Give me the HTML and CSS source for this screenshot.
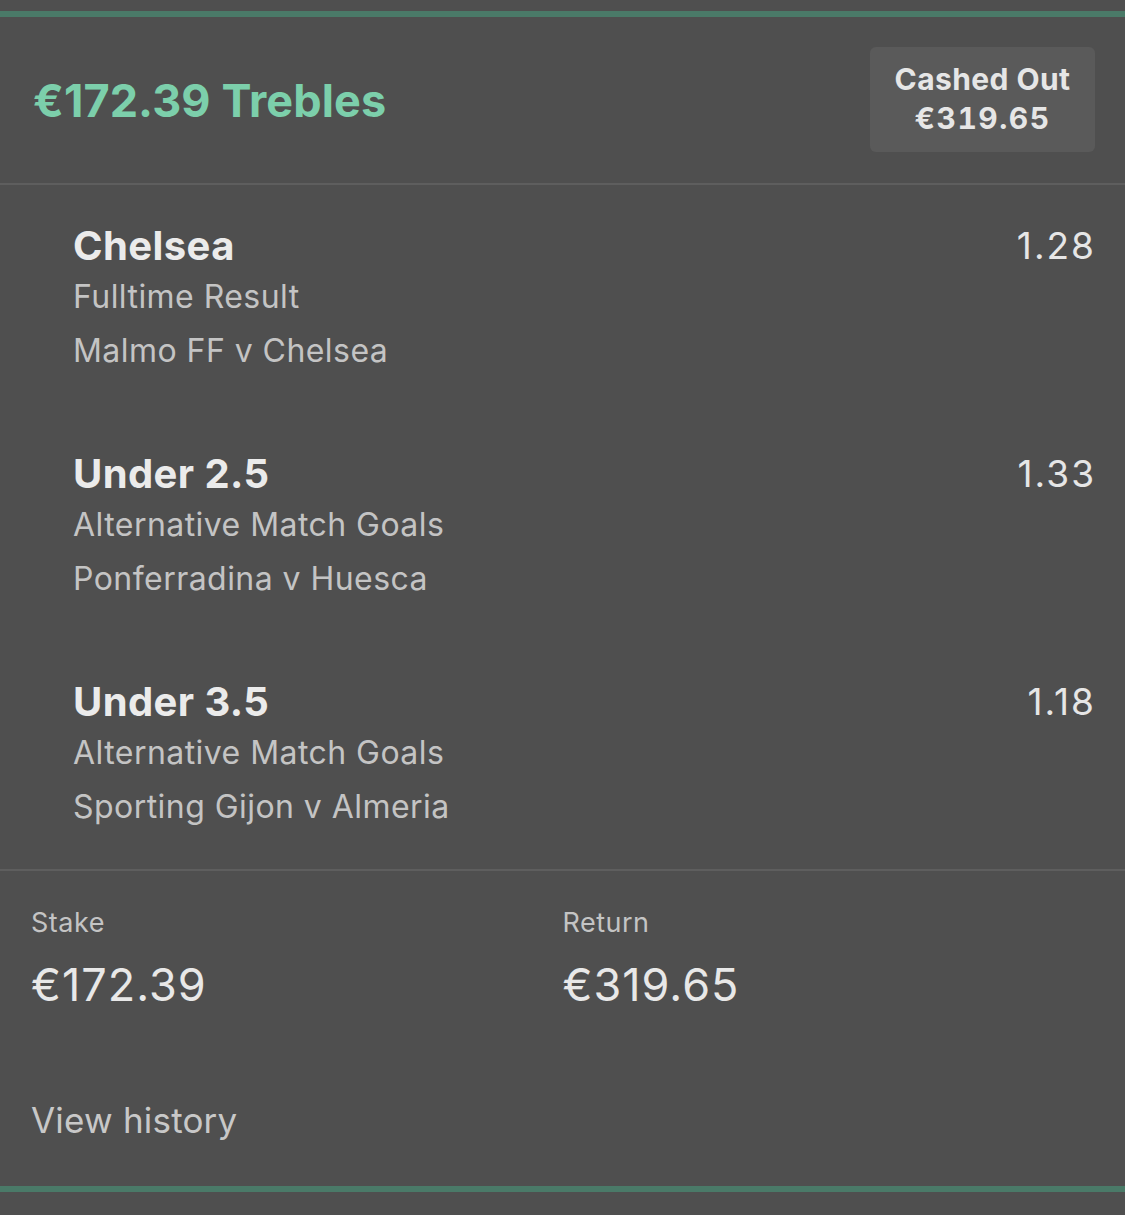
FILE: index.html
```html
<!DOCTYPE html>
<html lang="en">
<head>
<meta charset="utf-8">
<title>Trebles bet</title>
<link rel="stylesheet" href="styles.css">
</head>
<body>
<div class="page">
  <div class="card">
    <header class="bet-header">
      <h1 class="bet-title">€172.39 Trebles</h1>
      <div class="cashout-badge">
        <span class="cashout-label">Cashed Out</span>
        <span class="cashout-value">€319.65</span>
      </div>
    </header>
    <section class="selections">
      <div class="selection">
        <div class="selection-info">
          <div class="selection-name">Chelsea</div>
          <div class="selection-market">Fulltime Result</div>
          <div class="selection-event">Malmo FF v Chelsea</div>
        </div>
        <div class="selection-odds">1.28</div>
      </div>
      <div class="selection">
        <div class="selection-info">
          <div class="selection-name">Under 2.5</div>
          <div class="selection-market">Alternative Match Goals</div>
          <div class="selection-event">Ponferradina v Huesca</div>
        </div>
        <div class="selection-odds">1.33</div>
      </div>
      <div class="selection">
        <div class="selection-info">
          <div class="selection-name">Under 3.5</div>
          <div class="selection-market">Alternative Match Goals</div>
          <div class="selection-event">Sporting Gijon v Almeria</div>
        </div>
        <div class="selection-odds">1.18</div>
      </div>
    </section>
    <section class="summary">
      <div class="summary-grid">
        <div class="summary-item">
          <div class="summary-label">Stake</div>
          <div class="summary-value">€172.39</div>
        </div>
        <div class="summary-item">
          <div class="summary-label">Return</div>
          <div class="summary-value">€319.65</div>
        </div>
      </div>
      <div class="history-link">View history</div>
    </section>
  </div>
</div>
</body>
</html>
```

FILE: styles.css
```css
* { box-sizing: border-box; }

html, body {
  margin: 0;
  padding: 0;
  background: #4f4f4f;
}

body {
  font-family: Inter, "Noto Sans", "Liberation Sans", sans-serif;
  color: #e8e8e8;
}

.page {
  padding-top: 11px;
  height: 1215px;
  overflow: hidden;
}

.card {
  border-top: 6px solid #4a7a68;
  border-bottom: 6px solid #4a7a68;
  background: #4f4f4f;
}

.bet-header {
  height: 168px;
  display: flex;
  align-items: center;
  justify-content: space-between;
  padding: 0 30px 0 33px;
  border-bottom: 2px solid #5e5e5e;
}

.bet-title {
  margin: 0;
  font-size: 45px;
  font-weight: 700;
  color: #7ccfab;
  letter-spacing: 0.1px;
}

.cashout-badge {
  width: 225px;
  height: 105px;
  margin-bottom: 2px;
  border-radius: 6px;
  background: #5a5a5a;
  display: flex;
  flex-direction: column;
  align-items: center;
  justify-content: center;
  font-size: 30px;
  font-weight: 700;
  line-height: 39px;
  color: #e6e6e6;
}

.cashout-label {
  letter-spacing: 0.4px;
}

.cashout-value {
  font-feature-settings: "tnum" 1;
  letter-spacing: 1.5px;
}

.selections {
  padding: 37px 29px 35px 73px;
  display: flex;
  flex-direction: column;
  gap: 72px;
  border-bottom: 2px solid #5e5e5e;
}

.selection {
  display: flex;
  justify-content: space-between;
  align-items: flex-start;
}

.selection-name {
  font-size: 40px;
  line-height: 48px;
  font-weight: 700;
  color: #ebebeb;
  letter-spacing: 0.4px;
}

.selection-market,
.selection-event {
  font-size: 32px;
  line-height: 54px;
  color: #c4c4c4;
  letter-spacing: 0.45px;
}

.selection-odds {
  font-size: 37px;
  line-height: 48px;
  color: #e6e6e6;
  letter-spacing: 2px;
}

.summary {
  padding: 35px 31px 44px 31px;
}

.summary-grid {
  display: grid;
  grid-template-columns: 1fr 1fr;
}

.summary-label {
  font-size: 27px;
  line-height: 34px;
  color: #c4c4c4;
  letter-spacing: 0.5px;
}

.summary-value {
  margin-top: 17px;
  font-size: 45px;
  line-height: 56px;
  color: #e8e8e8;
  letter-spacing: 1px;
}

.history-link {
  margin-top: 85px;
  font-size: 35px;
  line-height: 44px;
  color: #c8c8c8;
  letter-spacing: 0.2px;
}
```
